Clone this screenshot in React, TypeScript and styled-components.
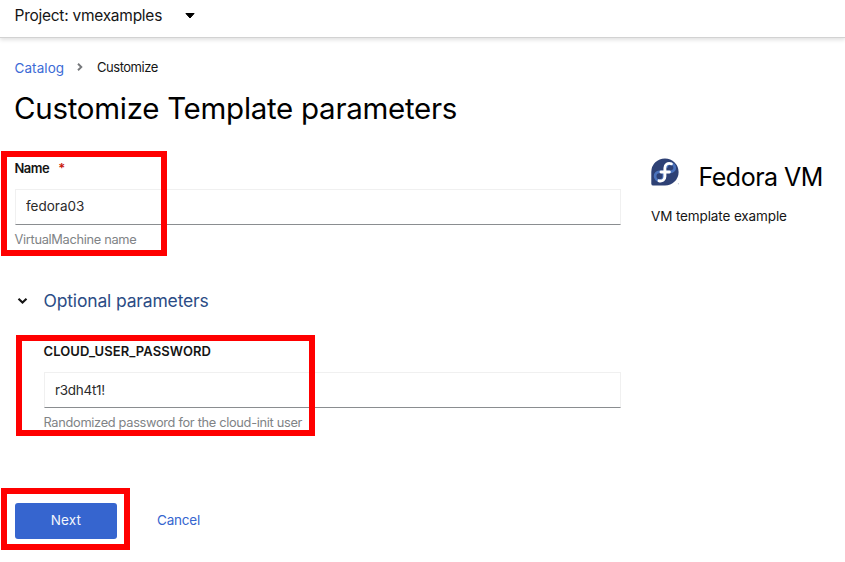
import React from 'react';
import styled, { createGlobalStyle } from 'styled-components';

const GlobalStyle = createGlobalStyle`
  * { box-sizing: border-box; }
  body { margin: 0; background: #fff; color: #151515; font-family: Inter, "Open Sans", sans-serif; }
`;

const Page = styled.div`
  height: 562px;
  overflow: hidden;
`;

const ProjectBar = styled.header`
  height: 38px;
  padding: 0 14.5px 6px;
  display: flex;
  align-items: center;
  gap: 22.5px;
  border-bottom: 1px solid #d2d2d2;
  box-shadow: 0 2px 4px rgba(3, 3, 3, 0.12);
  font-size: 15.5px;
  letter-spacing: -0.26px;
`;

const Breadcrumb = styled.nav`
  height: 20px;
  margin: 19px 0 0 14.5px;
  display: flex;
  align-items: center;
  font-size: 13px;
  line-height: 20px;
  letter-spacing: -0.47px;
`;

const CrumbLink = styled.a`
  width: 62.5px;
  padding-top: 2px;
  font-size: 13.5px;
  letter-spacing: 0.08px;
  color: #3c6bd6;
`;

const CrumbArrow = styled.svg`
  margin: -1px 14px 0 0;
`;

const Title = styled.h1`
  margin: 11px 0 0 14px;
  font-size: 29.5px;
  font-weight: 400;
  line-height: 40px;
  letter-spacing: -0.28px;
  color: #000;
`;

const Columns = styled.div`
  display: grid;
  grid-template-columns: 606px 1fr;
  column-gap: 30px;
  padding-left: 15px;
  margin-top: 30px;
`;

const Form = styled.form`
  display: flex;
  flex-direction: column;
`;

const Field = styled.div<{ $indent?: number }>`
  position: relative;
  height: 91px;
  margin-left: ${(p) => p.$indent ?? 0}px;
`;

const Label = styled.label<{ $spacing: number }>`
  display: flex;
  gap: 9px;
  height: 31px;
  margin-left: -0.5px;
  line-height: 21px;
  font-size: 13px;
  font-weight: 600;
  letter-spacing: ${(p) => p.$spacing}px;
`;

const Required = styled.span`
  color: #c9190b;
`;

const TextInput = styled.input<{ $spacing?: number; $lift?: number }>`
  display: block;
  width: 100%;
  height: 36px;
  padding: 0 10px ${(p) => p.$lift ?? 1}px;
  border: 1px solid #f0f0f0;
  border-bottom-color: #8a8d90;
  border-radius: 0;
  outline: none;
  background: #fff;
  color: #2b2b2b;
  font: 13.5px Inter, sans-serif;
  letter-spacing: ${(p) => p.$spacing ?? 0}px;
`;

const Helper = styled.div`
  margin: 5px 0 0 -0.5px;
  line-height: 20px;
  font-size: 12.8px;
  letter-spacing: -0.31px;
  color: #808386;
  white-space: nowrap;
`;

const Highlight = styled.div<{ $x: number; $y: number; $w: number; $h: number }>`
  position: absolute;
  left: ${(p) => p.$x}px;
  top: ${(p) => p.$y}px;
  width: ${(p) => p.$w}px;
  height: ${(p) => p.$h}px;
  border: 6px solid #f00;
  pointer-events: none;
`;

const SectionToggle = styled.div`
  display: flex;
  align-items: center;
  gap: 15.5px;
  height: 30px;
  margin: 36px 0 26px 2px;
  font-size: 17.5px;
  letter-spacing: -0.16px;
  color: #2b4c85;
`;

const ToggleChevron = styled.svg`
  margin-top: 1px;
`;

const Actions = styled.div`
  position: relative;
  display: flex;
  align-items: center;
  gap: 40px;
  margin-top: 71px;
  font-size: 13.5px;
`;

const PrimaryButton = styled.button`
  width: 102px;
  height: 36px;
  padding: 0 0 2px;
  border: 0;
  border-radius: 3px;
  background: #3665cf;
  color: #f2f5fc;
  font: 13.5px Inter, sans-serif;
  letter-spacing: 0.15px;
`;

const CancelLink = styled.a`
  padding-bottom: 3px;
  letter-spacing: -0.2px;
  color: #3665cf;
`;

const Summary = styled.aside`
  color: #151515;
`;

const SummaryHeader = styled.div`
  display: flex;
  height: 38px;
`;

const SummaryTitle = styled.h2`
  margin: 2px 0 0 18.5px;
  font-size: 25px;
  font-weight: 400;
  line-height: 34px;
  letter-spacing: -0.5px;
  color: #000;
  white-space: nowrap;
`;

const SummaryText = styled.p`
  margin: 10px 0 0;
  line-height: 20px;
  font-size: 13.5px;
  letter-spacing: -0.12px;
`;

const FedoraLogo = () => (
  <svg width="29" height="28" viewBox="0 0 29 28">
    <path d="M14 .4a13.6 13.6 0 1 1 0 27.2H2.2A2 2 0 0 1 .3 25.7V14A13.6 13.6 0 0 1 14 .4Z" fill="#2e4175" />
    <path
      d="M11.7 13.8H8.2a4.3 4.3 0 1 0 4.5 4.4V13.8h4.2M16.3 13.8h3.6a4.1 4.1 0 1 0-4.4-4.2"
      fill="none"
      stroke="#4a72bc"
      strokeWidth="2.7"
    />
    <path
      d="M20.4 5.8c-3.9-1.2-6.5.6-6.5 4.2v8.4c0 3.4-2.4 5.1-5.9 4.4M10 14h8.4"
      fill="none"
      stroke="#fff"
      strokeWidth="2.9"
      strokeLinecap="round"
    />
    <circle cx="27.4" cy="25.8" r="0.5" fill="#9aa5c0" />
  </svg>
);

export default function App() {
  return (
    <Page>
      <GlobalStyle />
      <ProjectBar>
        Project: vmexamples
        <svg width="10" height="6" viewBox="0 0 10 6">
          <path d="M.9.5h8.2L5 5Z" fill="#000" stroke="#000" strokeLinejoin="round" />
        </svg>
      </ProjectBar>
      <Breadcrumb>
        <CrumbLink>Catalog</CrumbLink>
        <CrumbArrow width="6" height="8" viewBox="0 0 6 8">
          <path d="m1 .8 3.3 3.2L1 7.2" fill="none" stroke="#77797c" strokeWidth="1.9" />
        </CrumbArrow>
        Customize
      </Breadcrumb>
      <Title>Customize Template parameters</Title>
      <Columns>
        <Form>
          <Field>
            <Label $spacing={-0.5}>
              Name <Required>*</Required>
            </Label>
            <TextInput defaultValue="fedora03" $lift={3} />
            <Helper>VirtualMachine name</Helper>
            <Highlight $x={-14} $y={-7} $w={166} $h={105} />
          </Field>
          <SectionToggle>
            <ToggleChevron width="11" height="8" viewBox="0 0 11 8">
              <path d="m1.5 1.7 4 3.8 4-3.8" fill="none" stroke="#151515" strokeWidth="2.1" />
            </ToggleChevron>
            Optional parameters
          </SectionToggle>
          <Field $indent={29}>
            <Label $spacing={0.08}>CLOUD_USER_PASSWORD</Label>
            <TextInput defaultValue="r3dh4t1!" $spacing={-0.3} />
            <Helper>Randomized password for the cloud-init user</Helper>
            <Highlight $x={-28} $y={-6} $w={299} $h={101} />
          </Field>
          <Actions>
            <PrimaryButton type="button">Next</PrimaryButton>
            <CancelLink>Cancel</CancelLink>
            <Highlight $x={-14} $y={-15} $w={129} $h={62} />
          </Actions>
        </Form>
        <Summary>
          <SummaryHeader>
            <FedoraLogo />
            <SummaryTitle>Fedora VM</SummaryTitle>
          </SummaryHeader>
          <SummaryText>VM template example</SummaryText>
        </Summary>
      </Columns>
    </Page>
  );
}
